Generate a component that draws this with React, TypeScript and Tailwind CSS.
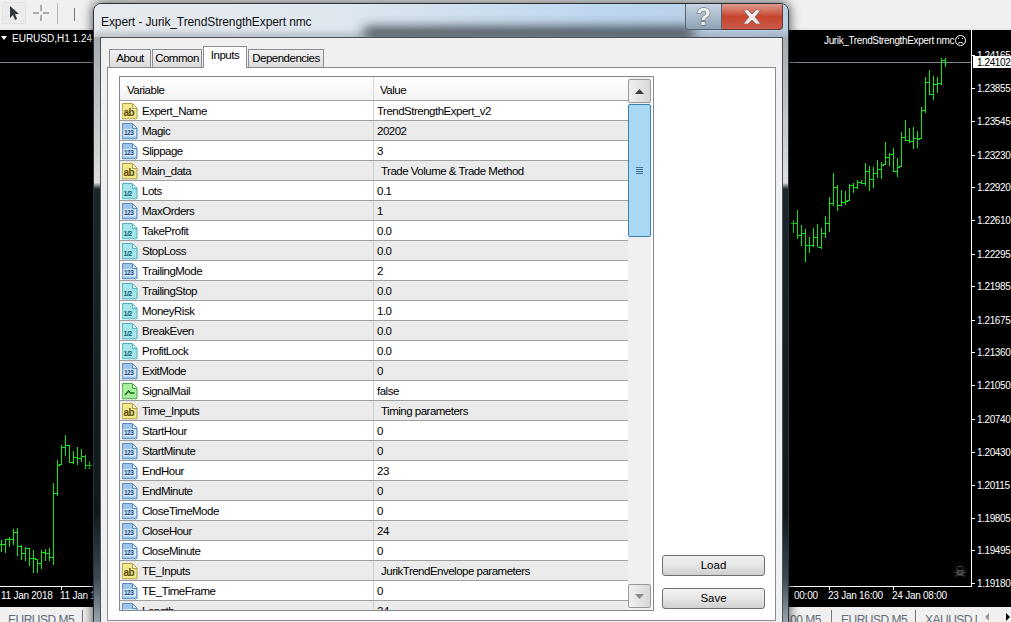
const FONT = { fontFamily: '"Liberation Sans", Arial, sans-serif' };

type Kind = "ab" | "n" | "d" | "b";

const ROWS: { name: string; value: string; kind: Kind; indent?: boolean }[] = [
  { name: "Expert_Name", value: "TrendStrengthExpert_v2", kind: "ab" },
  { name: "Magic", value: "20202", kind: "n" },
  { name: "Slippage", value: "3", kind: "n" },
  { name: "Main_data", value: "Trade Volume & Trade Method", kind: "ab", indent: true },
  { name: "Lots", value: "0.1", kind: "d" },
  { name: "MaxOrders", value: "1", kind: "n" },
  { name: "TakeProfit", value: "0.0", kind: "d" },
  { name: "StopLoss", value: "0.0", kind: "d" },
  { name: "TrailingMode", value: "2", kind: "n" },
  { name: "TrailingStop", value: "0.0", kind: "d" },
  { name: "MoneyRisk", value: "1.0", kind: "d" },
  { name: "BreakEven", value: "0.0", kind: "d" },
  { name: "ProfitLock", value: "0.0", kind: "d" },
  { name: "ExitMode", value: "0", kind: "n" },
  { name: "SignalMail", value: "false", kind: "b" },
  { name: "Time_Inputs", value: "Timing parameters", kind: "ab", indent: true },
  { name: "StartHour", value: "0", kind: "n" },
  { name: "StartMinute", value: "0", kind: "n" },
  { name: "EndHour", value: "23", kind: "n" },
  { name: "EndMinute", value: "0", kind: "n" },
  { name: "CloseTimeMode", value: "0", kind: "n" },
  { name: "CloseHour", value: "24", kind: "n" },
  { name: "CloseMinute", value: "0", kind: "n" },
  { name: "TE_Inputs", value: "JurikTrendEnvelope parameters", kind: "ab", indent: true },
  { name: "TE_TimeFrame", value: "0", kind: "n" },
  { name: "Length", value: "24", kind: "n" },
];

const PRICES: [string, number][] = [
  ["1.24165", 55], ["1.23855", 88], ["1.23545", 121], ["1.23230", 155], ["1.22920", 187],
  ["1.22610", 220], ["1.22295", 254], ["1.21985", 286], ["1.21675", 320], ["1.21360", 352],
  ["1.21050", 385], ["1.20740", 419], ["1.20430", 452], ["1.20115", 485], ["1.19805", 518],
  ["1.19495", 550], ["1.19180", 583],
];

// high, low, close
const RIGHT_BARS = [
  [540, 578, 548], [510, 598, 585], [556, 617, 578], [568, 665, 615], [590, 638, 615],
  [564, 620, 590], [552, 622, 622], [564, 628, 580], [528, 593, 550], [472, 575, 488],
  [400, 497, 442], [436, 512, 495], [450, 498, 485], [452, 496, 482], [432, 482, 434],
  [430, 460, 442], [420, 446, 425], [420, 432, 430], [370, 438, 392], [378, 452, 418],
  [380, 444, 398], [360, 414, 388], [366, 416, 374], [306, 374, 350], [340, 378, 342],
  [324, 396, 392], [354, 410, 382], [276, 382, 292], [240, 302, 300], [264, 308, 302],
  [262, 326, 295], [272, 324, 298], [202, 298, 210], [112, 220, 126], [90, 164, 162],
  [108, 180, 132], [110, 158, 128], [55, 134, 60], [55, 80, 67],
];

const LEFT_BARS = [
  [360, 395, 372], [356, 400, 358], [350, 380, 358], [326, 376, 336], [324, 408, 378],
  [376, 420, 400], [380, 424, 385], [384, 438, 415], [390, 458, 415], [418, 458, 430],
  [390, 446, 395], [388, 424, 400], [384, 422, 410], [190, 436, 220], [120, 228, 134],
  [76, 134, 80], [46, 108, 75], [74, 130, 125], [92, 132, 112], [82, 136, 115],
  [86, 126, 108], [106, 146, 136], [122, 146, 136],
];

function Bars({ data, startX, baseY }: { data: number[][]; startX: number; baseY: number }) {
  return (
    <g fill="#10e810" shapeRendering="crispEdges">
      {data.map(([h, l, c], i) => {
        const x = startX + i * 4;
        const top = Math.round(baseY + h / 3);
        const bot = Math.round(baseY + l / 3);
        const close = Math.round(baseY + c / 3);
        const open = i > 0 ? Math.round(baseY + data[i - 1][2] / 3) : close;
        return (
          <g key={i}>
            <rect x={x} y={top} width={1} height={bot - top} />
            <rect x={x - 2} y={Math.max(top, Math.min(open, bot - 1))} width={2} height={1} />
            <rect x={x + 1} y={close} width={2} height={1} />
          </g>
        );
      })}
    </g>
  );
}

function Chart() {
  return (
    <svg width={1011} height={579} viewBox="0 28 1011 579" className="block" fontFamily='"Liberation Sans", Arial, sans-serif'>
      <rect x={0} y={28} width={1011} height={579} fill="#000" />
      <rect x={0} y={28} width={1011} height={2} fill="#e8e8e8" />
      <rect x={0} y={62} width={971} height={1} fill="#778899" />
      <rect x={971} y={30} width={1} height={557} fill="#fff" />
      <rect x={0} y={586} width={972} height={1} fill="#fff" />
      <Bars data={RIGHT_BARS} startX={793} baseY={40} />
      <Bars data={LEFT_BARS} startX={1} baseY={420} />

      <polygon points="1,36 7,36 4,40" fill="#fff" />
      <text x={12} y={42} fontSize={10} fill="#fff">EURUSD,H1  1.24102</text>
      <text x={824} y={44} fontSize={10} fill="#fff" letterSpacing={-0.37}>Jurik_TrendStrengthExpert nmc</text>
      <g fill="none" stroke="#fff">
        <circle cx={960.5} cy={40.5} r={5} />
        <path d="M958 43.5c1-1.4 4-1.4 5 0" />
      </g>
      <rect x={958} y={38} width={1} height={1} fill="#fff" />
      <rect x={962} y={38} width={1} height={1} fill="#fff" />

      {PRICES.map(([p, y]) => (
        <g key={p}>
          <rect x={971} y={y} width={4} height={1} fill="#fff" />
          <text x={977} y={y + 4} fontSize={10} fill="#fff" letterSpacing={-0.4}>{p}</text>
        </g>
      ))}
      <rect x={973} y={56} width={38} height={12} fill="#fff" />
      <text x={977} y={66} fontSize={10} fill="#000" letterSpacing={-0.4}>1.24102</text>

      <text x={960} y={577} fontSize={15} fill="#777" textAnchor="middle" fontFamily='"DejaVu Sans", sans-serif'>☠</text>

      {[61, 829, 893].map((x) => (
        <rect key={x} x={x} y={586} width={1} height={4} fill="#fff" />
      ))}
      <text x={1} y={599} fontSize={10} fill="#fff" letterSpacing={-0.25}>11 Jan 2018</text>
      <text x={60} y={599} fontSize={10} fill="#fff" letterSpacing={-0.25}>11 Jan 19:00</text>
      <text x={794} y={599} fontSize={10} fill="#fff" letterSpacing={-0.25}>00:00</text>
      <text x={828} y={599} fontSize={10} fill="#fff" letterSpacing={-0.25}>23 Jan 16:00</text>
      <text x={892} y={599} fontSize={10} fill="#fff" letterSpacing={-0.25}>24 Jan 08:00</text>
    </svg>
  );
}

function Toolbar() {
  return (
    <div className="flex h-[28px] items-start bg-[#f0f0f0]">
      <div className="ml-[2px] mt-[2px] flex h-[22px] w-[24px] items-center justify-center border border-[#e4e4e4] bg-[#ececec]">
        <svg width="12" height="16" viewBox="0 0 12 16">
          <path d="M2 1v12l3-3 2 5 2-1-2-5h4z" fill="#303840" />
        </svg>
      </div>
      <svg width="16" height="16" viewBox="0 0 16 16" className="ml-[7px] mt-[5px]">
        <path d="M0 8h6M10 8h6M8 0v6M8 10v6" stroke="#6a6a6a" />
      </svg>
      <div className="ml-[8px] mt-[3px] h-[21px] w-px bg-[#b8b8b8]" />
      <div className="ml-[16px] mt-[8px] h-[13px] w-px bg-[#777]" />
    </div>
  );
}

function TabStrip() {
  return (
    <div className="flex h-[15px] items-start overflow-hidden whitespace-nowrap bg-[#f0f0f0] text-[12px] leading-[16px] tracking-[-0.5px] text-[#5f6b76]" style={FONT}>
      <span className="ml-[8px] mt-[5px] w-[74px] shrink-0">EURUSD M5</span>
      <span className="mt-[3px] h-[12px] w-px shrink-0 bg-[#777]" />
      <span className="ml-[707px] mt-[5px] w-[41px] shrink-0">00 M5</span>
      <span className="mt-[3px] h-[12px] w-px shrink-0 bg-[#777]" />
      <span className="ml-[9px] mt-[5px] w-[74px] shrink-0">EURUSD M5</span>
      <span className="mt-[3px] h-[12px] w-px shrink-0 bg-[#777]" />
      <span className="ml-[9px] mt-[5px] w-[52px] shrink-0 overflow-hidden">XAUUSD M5</span>
      <svg width="8" height="8" viewBox="0 0 8 8" className="ml-[7px] mt-[6px] shrink-0"><path d="M5 0v8L1 4z" fill="#999" /></svg>
      <svg width="8" height="8" viewBox="0 0 8 8" className="ml-[11px] mt-[6px] shrink-0"><path d="M3 0v8l4-4z" fill="#000" /></svg>
    </div>
  );
}

const ICON_OUTLINE = "M.5.5h10l4.500 4.500v10.200l-1.500 1-1.500-1-1.500 1-1.500-1-1.500 1-1.500-1-1.500 1-1.500-1-1.500 1-1.500-1z";

function TypeIcon({ kind }: { kind: Kind }) {
  const c = {
    ab: { fill: "#f3e88e", stroke: "#b0a040" },
    n: { fill: "#9cc6ee", stroke: "#5a8cc0" },
    d: { fill: "#a6e6ea", stroke: "#4eb0c0" },
    b: { fill: "#a8f0a0", stroke: "#48a848" },
  }[kind];
  return (
    <svg width="16" height="17" viewBox="0 0 16 17" className="mt-[2px] shrink-0 self-start" fontFamily='"Liberation Sans", Arial, sans-serif'>
      <path d={ICON_OUTLINE} fill={c.fill} stroke={c.stroke} />
      <path d="M10.5 1v4.500h4.500" fill="#fff" fillOpacity={0.6} stroke={c.stroke} />
      {kind === "ab" && <text x={1.500} y={12.500} fontSize={10} fontWeight={700} fill="#5a4c10">ab</text>}
      {kind === "n" && (
        <>
          <rect x={1.500} y={6} width={12.500} height={7.500} fill="#d8ebfb" />
          <text x={2} y={12.300} fontSize={6.500} fontWeight={700} fill="#103a78">123</text>
        </>
      )}
      {kind === "d" && <text x={1.500} y={12.500} fontSize={7} fontWeight={700} fill="#0f5a70">1/2</text>}
      {kind === "b" && <path d="M3 12l3.500-4 2 2h4" fill="none" stroke="#116611" strokeWidth={1.400} />}
    </svg>
  );
}

function Row({ name, value, kind, indent, alt }: { name: string; value: string; kind: Kind; indent?: boolean; alt: boolean }) {
  return (
    <div className={`flex h-[20px] shrink-0 border-b border-[#a0a0a0] leading-[19px] ${alt ? "bg-[#ebebeb]" : "bg-white"}`}>
      <div className="flex w-[254px] shrink-0 gap-[4px] border-r border-[#cfcfcf] pl-[2px]">
        <TypeIcon kind={kind} />
        <span className="pt-px">{name}</span>
      </div>
      <div className={`flex-1 whitespace-nowrap pt-px ${indent ? "pl-[7px]" : "pl-[3px]"}`}>{value}</div>
    </div>
  );
}

function ScrollButton({ up }: { up: boolean }) {
  return (
    <div className="flex h-[24px] shrink-0 items-center justify-center rounded-[2px] border border-[#9a9a9a] bg-linear-to-r from-[#f0f0f0] to-[#d8d8d8]">
      <svg width="9" height="5" viewBox="0 0 9 5">
        <path d={up ? "M4.500 0l4.500 5h-9z" : "M0 0h9l-4.500 5z"} fill={up ? "#404040" : "#8a8a8a"} />
      </svg>
    </div>
  );
}

function ParamList() {
  return (
    <div className="flex h-[535px] w-[535px] shrink-0 border border-[#828790] bg-white">
      <div className="flex w-[508px] shrink-0 flex-col overflow-hidden">
        <div className="flex h-[24px] shrink-0 border-b border-[#a0a0a0] bg-linear-to-b from-white to-[#f3f3f3] leading-[26px]">
          <div className="w-[254px] shrink-0 border-r border-[#d8d8d8] pl-[7px]">Variable</div>
          <div className="pl-[6px]">Value</div>
        </div>
        {ROWS.map((r, i) => (
          <Row key={r.name} {...r} alt={i % 2 === 1} />
        ))}
      </div>
      <div className="mr-[2px] flex w-[23px] shrink-0 flex-col bg-[#f0f0f0] pb-[2px] pt-[2px]">
        <ScrollButton up />
        <div className="mt-[1px] flex h-[133px] shrink-0 items-center justify-center rounded-[2px] border border-[#3c7fb1] bg-[#a9d9f5]">
          <div className="flex w-[7px] flex-col gap-[1px]">
            <div className="h-px bg-[#3d6f90]" />
            <div className="h-px bg-[#3d6f90]" />
            <div className="h-px bg-[#3d6f90]" />
            <div className="h-px bg-[#3d6f90]" />
          </div>
        </div>
        <div className="flex-1" />
        <ScrollButton up={false} />
      </div>
    </div>
  );
}

function PushButton({ label }: { label: string }) {
  return (
    <div className="flex h-[21px] w-[103px] items-center justify-center rounded-[3px] border border-[#707070] bg-linear-to-b from-[#f2f2f2] via-[#e6e6e6] to-[#cfcfcf]">
      {label}
    </div>
  );
}

function Tab({ label, width, active }: { label: string; width: string; active?: boolean }) {
  if (active) {
    return (
      <div className={`z-10 -mb-px flex h-[22px] items-center justify-center border border-b-0 border-[#898c95] bg-white pb-[3px] ${width}`}>
        {label}
      </div>
    );
  }
  return (
    <div className={`flex h-[18px] items-center justify-center border border-b-0 border-[#898c95] bg-linear-to-b from-[#f2f2f2] to-[#dcdcdc] ${width}`}>
      {label}
    </div>
  );
}

function ExpertDialog() {
  return (
    <div
      className="absolute left-[93px] top-[3px] h-[640px] w-[696px] overflow-hidden rounded-t-[8px] border border-[#2c3238] bg-[linear-gradient(to_bottom,#9aa0a6_0%,#dcdee0_28%,#1a262a_29%,#10191c_80%,#3a4a55_90%,#c8ced4_100%)] text-[11.5px] tracking-[-0.5px] text-black shadow-[0_0_12px_rgba(0,0,0,0.75)]"
      style={FONT}
    >
      <div className="relative flex h-[33px] items-start overflow-hidden bg-[linear-gradient(to_right,#e6eaee_0%,#dfe7ef_35%,#bcd6ee_75%,#b9cfe4_100%)]">
        <div className="absolute bottom-[-6px] left-[270px] h-[16px] w-[330px] bg-[#20262c] opacity-80 blur-[6px]" />
        <div className="absolute bottom-[-4px] left-0 h-[8px] w-[696px] bg-[#8a9096] opacity-50 blur-[3px]" />
        <span className="relative ml-[7px] mt-[9px] text-[12px] tracking-[-0.1px] text-[#111]">Expert - Jurik_TrendStrengthExpert nmc</span>
        <div className="relative ml-auto mr-[5px] flex h-[26px]">
          <div className="flex w-[37px] items-center justify-center rounded-bl-[4px] border border-t-0 border-[#59636e] bg-linear-to-b from-[#c6d4e2] to-[#8ea3b6] text-[24px] font-bold leading-none tracking-normal text-[#eef2f5] [-webkit-text-stroke:1px_#555] [paint-order:stroke_fill]">
            ?
          </div>
          <div className="flex w-[61px] items-center justify-center rounded-br-[4px] border border-l-0 border-t-0 border-[#6a3a32] bg-linear-to-b from-[#dd9b8e] via-[#c6442e] to-[#c85a48]">
            <svg width="18" height="14" viewBox="0 0 18 14">
              <path d="M1 0h4l4 4 4-4h4v1l-5 6 5 6v1h-4l-4-4-4 4H1v-1l5-6-5-6z" fill="#ededed" stroke="#59413c" strokeWidth={0.500} />
            </svg>
          </div>
        </div>
      </div>
      <div className="ml-[6px] h-[620px] w-[683px] border border-[#4a5058] bg-[#f0f0f0] pl-[6px]">
        <div className="flex h-[29px] items-end gap-px pl-[2px]">
          <Tab label="About" width="w-[42px]" />
          <Tab label="Common" width="w-[50px]" />
          <Tab label="Inputs" width="w-[44px]" active />
          <Tab label="Dependencies" width="w-[76px]" />
        </div>
        <div className="flex h-[554px] w-[669px] items-start border border-[#898c95] bg-white pl-[11px] pt-[8px]">
          <ParamList />
          <div className="ml-[8px] flex h-[535px] flex-col justify-end gap-[12px] pb-[2px] tracking-normal">
            <PushButton label="Load" />
            <PushButton label="Save" />
          </div>
        </div>
      </div>
    </div>
  );
}

export default function App() {
  return (
    <div className="relative h-[622px] w-[1011px] overflow-hidden bg-black">
      <Toolbar />
      <Chart />
      <TabStrip />
      <ExpertDialog />
    </div>
  );
}
